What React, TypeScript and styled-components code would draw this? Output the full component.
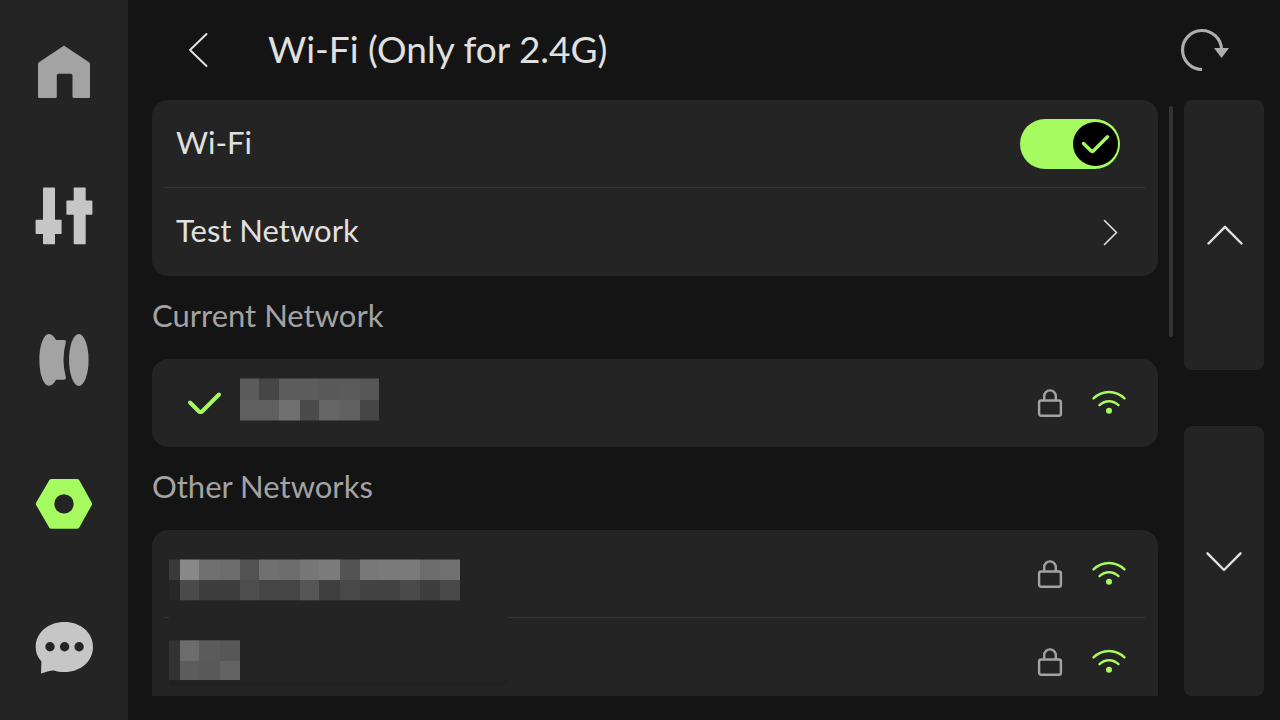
import React, { useState } from 'react';
import styled, { createGlobalStyle } from 'styled-components';

const GlobalStyle = createGlobalStyle`
  *, *::before, *::after { box-sizing: border-box; }
  body {
    margin: 0;
    background: #141414;
    color: #e0e0e0;
    font-family: Lato, "Noto Sans", sans-serif;
  }
  button { border: 0; padding: 0; background: none; color: inherit; font: inherit; cursor: pointer; }
  svg { display: block; }
`;

const GREEN = '#a5fb5f';
const PANEL = '#242424';

const Screen = styled.div`
  display: flex;
  height: 100vh;
  min-height: 480px;
`;

const Sidebar = styled.nav`
  flex: 0 0 128px;
  display: flex;
  flex-direction: column;
  background: ${PANEL};
`;

const NavButton = styled.button<{ $tone: string }>`
  flex: 1;
  display: flex;
  align-items: center;
  justify-content: center;
  color: ${(p) => p.$tone};
`;

const Main = styled.main`
  flex: 1;
  min-width: 0;
  display: flex;
  flex-direction: column;
  padding: 0 16px 24px 24px;
`;

const Header = styled.header`
  flex: 0 0 100px;
  display: flex;
  align-items: center;
`;

const BackButton = styled.button`
  display: flex;
  align-items: center;
  justify-content: center;
  width: 92px;
  height: 64px;
`;

const Title = styled.h1`
  flex: 1;
  margin: 0 0 0 24px;
  padding-bottom: 2px;
  font-size: 37px;
  line-height: 48px;
  font-weight: 400;
`;

const RefreshButton = styled.button`
  display: flex;
  align-items: center;
  justify-content: center;
  width: 120px;
  height: 64px;
  color: #adadad;
`;

const Body = styled.div`
  flex: 1;
  min-height: 0;
  display: grid;
  grid-template-columns: minmax(0, 1fr) 4px 80px;
  grid-template-rows: minmax(0, 1fr);
  column-gap: 11px;
`;

const List = styled.div`
  overflow: hidden;
`;

const Track = styled.div`
  padding-top: 6px;
  height: 100%;
`;

const Thumb = styled.div`
  height: 231px;
  border-radius: 2px;
  background: #333333;
`;

const Pager = styled.div`
  display: grid;
  grid-template-rows: 1fr 1fr;
  row-gap: 56px;
`;

const PageButton = styled.button`
  display: flex;
  align-items: center;
  justify-content: center;
  border-radius: 8px;
  background-color: ${PANEL};
`;

const Card = styled.section`
  position: relative;
  border-radius: 16px;
  background: ${PANEL};
`;

const Row = styled.div`
  display: flex;
  align-items: center;
  height: 88px;
  padding: 0 31px 0 24px;
`;

const Divider = styled.hr`
  height: 1px;
  margin: -1px 12px 0;
  border: 0;
  background: #333333;
`;

const RowLabel = styled.label`
  flex: 1;
  padding-bottom: 5px;
  font-size: 31px;
  line-height: 40px;
  text-align: left;
`;

const LinkRow = styled(Row).attrs({ as: 'button' })`
  width: 100%;
`;

const LinkText = styled(RowLabel).attrs({ as: 'span' })``;

const SectionTitle = styled.h2`
  margin: 0;
  padding: 19px 0 24px;
  color: #a3a3a3;
  font-size: 31px;
  line-height: 40px;
  font-weight: 400;
`;

const SwitchBox = styled.span`
  position: relative;
  display: block;
  width: 100px;
  height: 50px;
  margin-right: 7px;
`;

const SwitchInput = styled.input`
  appearance: none;
  display: block;
  width: 100%;
  height: 100%;
  margin: 0;
  border-radius: 25px;
  background: #555555;
  cursor: pointer;
  &:checked { background: ${GREEN}; }
`;

const Knob = styled.span<{ $on: boolean }>`
  position: absolute;
  top: 3px;
  left: ${(p) => (p.$on ? '53px' : '2px')};
  width: 45px;
  height: 44px;
  border-radius: 50%;
  background: #000000;
  pointer-events: none;
`;

const Status = styled.div`
  display: flex;
  align-items: center;
  gap: 28px;
  margin-left: auto;
`;

const ConnectedMark = styled.span`
  width: 40px;
  margin: 0 16px 0 8px;
`;

const Overlay = styled.div`
  position: absolute;
  top: 29px;
  left: 17px;
`;

const HomeIcon = () => (
  <svg width="64" height="64" viewBox="0 0 64 64" fill="currentColor">
    <path d="M31 6.2Q32 5.2 33 6.2L57 22.2Q58 23 58 24V56.5Q58 58 56.5 58H42Q40.5 58 40.5 56.5V35.5Q40.5 33.7 38.7 33.7H26.5Q24.8 33.7 24.8 35.5V56.5Q24.8 58 23.3 58H7.5Q6 58 6 56.5V24Q6 23 7 22.2Z" />
  </svg>
);

const SlidersIcon = () => (
  <svg width="64" height="64" viewBox="0 0 64 64" fill="currentColor">
    <rect x="11" y="3.5" width="12" height="56.7" rx="0.8" />
    <rect x="3.6" y="35.8" width="26" height="14.2" rx="0.8" />
    <rect x="41.7" y="3.5" width="12" height="56.7" rx="0.8" />
    <rect x="34.4" y="16.6" width="26" height="14.2" rx="0.8" />
  </svg>
);

const SpoolIcon = () => (
  <svg width="64" height="64" viewBox="0 0 64 64" fill="currentColor">
    <path d="M17 6C20 6 22 8.5 24 12H32Q34.3 12 33.8 14.5Q29.2 32 33.8 49Q34.3 51.8 32 51.8H24C22 55.5 20 57.7 17 57.7C11.5 57.7 7.4 46 7.4 32C7.4 18 11.5 6 17 6Z" />
    <ellipse cx="46.8" cy="31.9" rx="9.8" ry="26" />
  </svg>
);

const NutIcon = () => (
  <svg width="64" height="64" viewBox="0 0 64 64" fill="currentColor">
    <path
      fillRule="evenodd"
      d="M19.5 7H45Q46.5 7 47.3 8.3L59.7 30.5Q60.4 31.9 59.7 33.2L47.3 55.4Q46.5 56.7 45 56.7H19.5Q18 56.7 17.2 55.4L4.2 33.2Q3.5 31.9 4.2 30.5L17.2 8.3Q18 7 19.5 7ZM32 22.2a9.7 9.7 0 1 0 0 19.4a9.7 9.7 0 1 0 0 -19.4Z"
    />
  </svg>
);

const ChatIcon = () => (
  <svg width="64" height="64" viewBox="0 0 64 64">
    <path
      fill="currentColor"
      d="M32.4 6C48.5 6 61 16.5 61 31C61 45.5 48.5 56 32.4 56C28.5 56 25.2 55.5 22 54.5C17.5 54.5 13.5 56 9 57.5L9.4 45.5C5.5 41 3.7 36.5 3.7 31C3.7 16.5 16.5 6 32.4 6Z"
    />
    <circle cx="18" cy="30.8" r="4.7" fill={PANEL} />
    <circle cx="32.6" cy="30.8" r="4.7" fill={PANEL} />
    <circle cx="47.1" cy="30.8" r="4.7" fill={PANEL} />
  </svg>
);

const RefreshIcon = () => (
  <svg width="52" height="44" viewBox="0 0 52 44">
    <path d="M24 41.5A19.5 19.5 0 1 1 43.5 21" fill="none" stroke="currentColor" strokeWidth="3.2" />
    <path d="M36 20H51L43.5 30Z" fill="currentColor" />
  </svg>
);

interface StrokeProps {
  width: number;
  height: number;
  d: string;
  weight: number;
  color?: string;
}

const StrokeIcon = ({ width, height, d, weight, color = 'currentColor' }: StrokeProps) => (
  <svg
    width={width}
    height={height}
    viewBox={`0 0 ${width} ${height}`}
    fill="none"
    stroke={color}
    strokeWidth={weight}
    strokeLinecap="round"
    strokeLinejoin="round"
  >
    <path d={d} />
  </svg>
);

const LockIcon = () => (
  <svg width="26" height="30" viewBox="0 0 26 30" fill="none" stroke="#a3a3a3" strokeWidth="2.4">
    <rect x="2.1" y="12.5" width="21.8" height="15.2" rx="2" />
    <path d="M7.2 12.4V8.2a5.8 5.8 0 0 1 11.6 0V12.4" />
  </svg>
);

const WifiIcon = () => (
  <svg width="36" height="30" viewBox="0 0 36 30" fill="none" stroke={GREEN} strokeWidth="2.4" strokeLinecap="round">
    <path d="M2.5 10.4C11.5 1.9 24.5 1.9 33.5 10.4" />
    <path d="M8.5 17.2C14 11.9 22 11.9 27.5 17.2" />
    <circle cx="18" cy="22.8" r="3" fill={GREEN} stroke="none" />
  </svg>
);

interface MosaicRow {
  y: number;
  h: number;
  shades: string[];
}

const MosaicCells = ({ edges, rows }: { edges: number[]; rows: MosaicRow[] }) => (
  <g>
    {rows.map((row) =>
      row.shades.map((shade, i) => (
        <rect
          key={`${row.y}-${i}`}
          x={edges[i]}
          y={row.y}
          width={edges[i + 1] - edges[i]}
          height={row.h}
          fill={`#${shade}${shade}${shade}`}
        />
      ))
    )}
  </g>
);

const CURRENT_EDGES = [0, 19, 39, 60, 79, 99, 120, 139];
const CURRENT_ROWS: MosaicRow[] = [
  { y: 0.5, h: 21.5, shades: ['5b', '46', '5c', '5c', '59', '5a', '57'] },
  { y: 22, h: 20.5, shades: ['5f', '5f', '70', '4b', '66', '61', '46'] },
];

const OTHER_EDGES = [0, 11, 30, 51, 71, 90, 110, 131, 150, 171, 191, 210, 231, 251, 271, 291];
const OTHER_ROWS: MosaicRow[] = [
  { y: 0.5, h: 20.5, shades: ['3a', '88', '70', '6c', '52', '70', '6d', '77', '7b', '53', '78', '7a', '7a', '6c', '71'] },
  { y: 21, h: 20.3, shades: ['28', '4b', '3e', '3e', '4d', '45', '45', '56', '3f', '48', '43', '43', '4a', '3e', '49'] },
  { y: 81.3, h: 20.7, shades: ['33', '6c', '5b', '57'] },
  { y: 102, h: 19, shades: ['33', '5c', '59', '63'] },
];

const NetworkStatus = () => (
  <Status>
    <LockIcon />
    <WifiIcon />
  </Status>
);

const NAV = [
  { name: 'Home', tone: '#a3a3a3', Icon: HomeIcon },
  { name: 'Controls', tone: '#c6c6c6', Icon: SlidersIcon },
  { name: 'Filament', tone: '#a3a3a3', Icon: SpoolIcon },
  { name: 'Settings', tone: GREEN, Icon: NutIcon },
  { name: 'Messages', tone: '#c6c6c6', Icon: ChatIcon },
];

export default function App() {
  const [enabled, setEnabled] = useState(true);

  return (
    <Screen>
      <GlobalStyle />
      <Sidebar>
        {NAV.map(({ name, tone, Icon }) => (
          <NavButton key={name} $tone={tone} aria-label={name}>
            <Icon />
          </NavButton>
        ))}
      </Sidebar>
      <Main>
        <Header>
          <BackButton aria-label="Back">
            <StrokeIcon width={22} height={36} weight={2} d="M19.5 2L3 18L19.5 34" />
          </BackButton>
          <Title>Wi-Fi (Only for 2.4G)</Title>
          <RefreshButton aria-label="Refresh">
            <RefreshIcon />
          </RefreshButton>
        </Header>
        <Body>
          <List>
            <Card>
              <Row>
                <RowLabel htmlFor="wifi">Wi-Fi</RowLabel>
                <SwitchBox>
                  <SwitchInput
                    id="wifi"
                    type="checkbox"
                    role="switch"
                    checked={enabled}
                    onChange={(e) => setEnabled(e.target.checked)}
                  />
                  <Knob $on={enabled}>
                    {enabled && <StrokeIcon width={45} height={44} weight={3.4} color={GREEN} d="M10.5 21.5L18.3 29Q19.3 30 20.3 29L34.5 14.8" />}
                  </Knob>
                </SwitchBox>
              </Row>
              <Divider />
              <LinkRow>
                <LinkText>Test Network</LinkText>
                <StrokeIcon width={30} height={28} weight={1.6} d="M7.5 2.5L19.5 14.5L7.5 26.5" />
              </LinkRow>
            </Card>
            <SectionTitle>Current Network</SectionTitle>
            <Card>
              <Row>
                <ConnectedMark>
                  <StrokeIcon width={40} height={24} weight={4} color={GREEN} d="M6 11.5L15 20.5Q16.5 21.5 18 20.5L35 3.5" />
                </ConnectedMark>
                <svg width="139" height="50" viewBox="0 0 139 50" role="img" aria-label="Hidden network name">
                  <MosaicCells edges={CURRENT_EDGES} rows={CURRENT_ROWS} />
                </svg>
                <NetworkStatus />
              </Row>
            </Card>
            <SectionTitle>Other Networks</SectionTitle>
            <Card>
              <Row>
                <NetworkStatus />
              </Row>
              <Divider />
              <Row>
                <NetworkStatus />
              </Row>
              <Divider />
              <Row>
                <NetworkStatus />
              </Row>
              <Overlay>
                <svg width="339" height="127" viewBox="0 0 339 127" role="img" aria-label="Hidden network names">
                  <rect width="339" height="121" fill={PANEL} />
                  <rect y="121" width="339" height="6" fill="#212121" />
                  <MosaicCells edges={OTHER_EDGES} rows={OTHER_ROWS} />
                </svg>
              </Overlay>
            </Card>
          </List>
          <Track>
            <Thumb />
          </Track>
          <Pager>
            <PageButton aria-label="Scroll up">
              <StrokeIcon width={38} height={22} weight={2.4} d="M3.5 19.5L20 2.8L36.500 19.5" />
            </PageButton>
            <PageButton aria-label="Scroll down">
              <StrokeIcon width={38} height={22} weight={2.4} d="M2.5 3.3L19 20L35.5 3.3" />
            </PageButton>
          </Pager>
        </Body>
      </Main>
    </Screen>
  );
}
